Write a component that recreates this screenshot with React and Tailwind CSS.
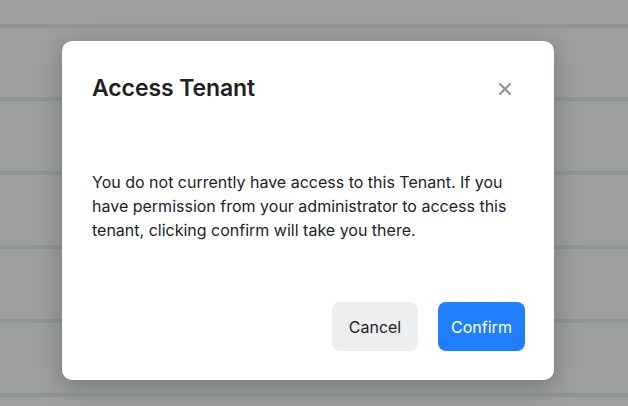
import React from "react";

export default function App() {
  return (
    <div className="relative w-[628px] h-[406px] overflow-hidden bg-[#9d9ea0]" style={{ fontFamily: "Inter, 'Liberation Sans', sans-serif" }}>
      <div className="flex flex-col">
        <div className="h-[28px] border-b-4 border-[#8f9495]" />
        <div className="h-[73px] border-b-4 border-[#8f9495]" />
        <div className="h-[74px] border-b-4 border-[#8f9495]" />
        <div className="h-[74px] border-b-4 border-[#8f9495]" />
        <div className="h-[74px] border-b-4 border-[#8f9495]" />
        <div className="h-[74px] border-b-4 border-[#8f9495]" />
      </div>
      <div className="absolute inset-0 pt-[41px] pl-[62px]">
        <div className="w-[492px] h-[339px] bg-white rounded-[10px] shadow-[0_6px_24px_rgba(0,0,0,0.25)] flex flex-col pl-[30px] pr-[29px] pt-[31px] pb-[29px]">
          <div className="flex items-center justify-between h-[33px]">
            <h2 className="text-[23px] leading-[33px] font-semibold text-[#1f2124] tracking-[-0.1px]">Access Tenant</h2>
            <svg width="14" height="14" viewBox="0 0 14 14" className="mr-[13px]">
              <path d="M2 2 L12 12 M12 2 L2 12" stroke="#8a9399" strokeWidth="2" strokeLinecap="round" />
            </svg>
          </div>
          <p className="mt-[65px] text-[16px] leading-[24px] text-[#222326]">
            You do not currently have access to this Tenant. If you have permission from your administrator to access this tenant, clicking confirm will take you there.
          </p>
          <div className="mt-auto flex justify-end gap-[20px]">
            <button className="w-[86px] h-[49px] rounded-[8px] bg-[#eceeef] text-[16px] text-[#222326]">Cancel</button>
            <button className="w-[87px] h-[49px] rounded-[8px] bg-[#1f7ffe] text-[16px] text-white">Confirm</button>
          </div>
        </div>
      </div>
    </div>
  );
}
